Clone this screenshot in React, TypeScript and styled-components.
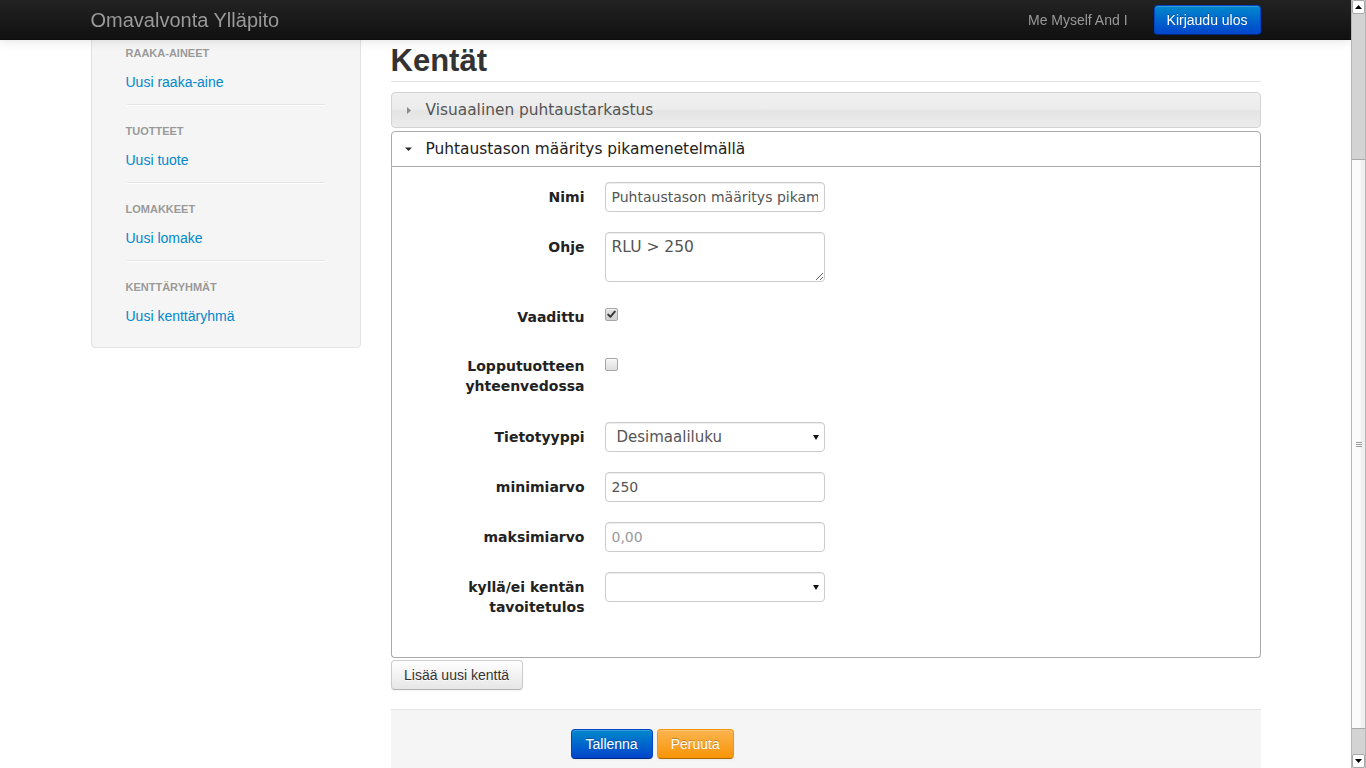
import React from "react";
import styled, { createGlobalStyle, css } from "styled-components";

const GlobalStyle = createGlobalStyle`
  html { overflow: hidden; }
  html, body { margin: 0; padding: 0; background: #fff; }
  body {
    margin-right: 15px;
    font-family: "Liberation Sans", Arial, Helvetica, sans-serif;
    font-size: 13px;
    line-height: 18px;
    color: #333;
  }
  * { box-sizing: border-box; }
`;

const Navbar = styled.header`
  position: fixed;
  top: 0;
  left: 0;
  right: 15px;
  z-index: 100;
  height: 40px;
  background: linear-gradient(#222222, #111111);
  border-bottom: 1px solid #0d0d0d;
  box-shadow: 0 1px 10px rgba(0, 0, 0, 0.12);
`;

const NavContainer = styled.div`
  width: 1170px;
  height: 40px;
  margin: 0 auto;
  display: flex;
  align-items: center;
`;

const Brand = styled.a`
  font-size: 20px;
  line-height: 20px;
  color: #999;
  text-decoration: none;
  flex: 1;
`;

const NavText = styled.span`
  font-size: 14px;
  line-height: 20px;
  color: #999;
  margin-right: 26px;
`;

/* Browser scrollbar (page is scrolled part way down) */
const ScrollRail = styled.div`
  position: fixed;
  top: 0;
  right: 0;
  bottom: 0;
  width: 15px;
  z-index: 200;
  display: flex;
  flex-direction: column;
  background: #d3d3d3;
  border-left: 1px solid #b5b5b5;
  border-right: 1px solid #b5b5b5;
`;

const ScrollArrow = styled.div`
  flex: none;
  height: 14px;
  display: flex;
  align-items: center;
  justify-content: center;
  background: #fff;
  border: 1px solid #a9a9a9;
  border-radius: 2px;
  svg {
    display: block;
  }
`;

const TrackGap = styled.div<{ $h: number }>`
  flex: none;
  height: ${(p) => p.$h}px;
`;

const TrackRest = styled.div`
  flex: 1;
`;

const Thumb = styled.div`
  flex: none;
  height: 570px;
  display: flex;
  align-items: center;
  justify-content: center;
  background: linear-gradient(90deg, #fbfbfb 0%, #fbfbfb 65%, #efefef 66%, #efefef 100%);
  border-top: 1px solid #aaaaaa;
  border-bottom: 1px solid #aaaaaa;
`;

const Grip = styled.div`
  width: 6px;
  height: 5px;
  border-top: 1px solid #9a9a9a;
  border-bottom: 1px solid #9a9a9a;
  display: flex;
  align-items: center;
  &::before {
    content: "";
    display: block;
    width: 100%;
    height: 1px;
    background: #9a9a9a;
  }
`;

type BtnKind = "default" | "primary" | "warning";

const btnColors: Record<BtnKind, ReturnType<typeof css>> = {
  default: css`
    color: #333;
    text-shadow: 0 1px 1px rgba(255, 255, 255, 0.75);
    background: linear-gradient(#ffffff, #e6e6e6);
    border: 1px solid #cccccc;
    border-bottom-color: #b3b3b3;
  `,
  primary: css`
    color: #fff;
    text-shadow: 0 -1px 0 rgba(0, 0, 0, 0.25);
    background: linear-gradient(#0088cc, #0044cc);
    border: 1px solid #0044cc;
    border-bottom-color: #002a80;
  `,
  warning: css`
    color: #fff;
    text-shadow: 0 -1px 0 rgba(0, 0, 0, 0.25);
    background: linear-gradient(#fbb450, #f89406);
    border: 1px solid #f89406;
    border-bottom-color: #ad6704;
  `,
};

const Button = styled.button<{ $kind?: BtnKind; $px?: number }>`
  display: inline-block;
  height: 30px;
  padding: 4px ${(p) => p.$px ?? 12}px;
  font-family: "Liberation Sans", Arial, sans-serif;
  font-size: 14px;
  line-height: 20px;
  border-radius: 4px;
  cursor: pointer;
  box-shadow: inset 0 1px 0 rgba(255, 255, 255, 0.2), 0 1px 2px rgba(0, 0, 0, 0.05);
  ${(p) => btnColors[p.$kind ?? "default"]}
`;

const Container = styled.div`
  width: 1170px;
  margin: 0 auto;
  padding-top: 20px;
  display: grid;
  grid-template-columns: 270px 870px;
  column-gap: 30px;
  align-items: start;
`;

const Well = styled.aside`
  background: #f5f5f5;
  border: 1px solid #e3e3e3;
  border-radius: 4px;
  padding: 19px;
  box-shadow: inset 0 1px 1px rgba(0, 0, 0, 0.05);
`;

const NavList = styled.ul`
  list-style: none;
  margin: 0;
  padding: 0 15px;
`;

const NavHeader = styled.li`
  padding: 3px 0;
  font-size: 11px;
  font-weight: bold;
  line-height: 20px;
  color: #999;
  text-transform: uppercase;
  text-shadow: 0 1px 0 rgba(255, 255, 255, 0.5);
`;

const NavItem = styled.li`
  padding: 6px 0 2px;
  line-height: 20px;
  font-size: 14px;
  a {
    color: #0088cc;
    text-decoration: none;
  }
`;

const Divider = styled.li`
  height: 1px;
  margin: 10px 1px 12px;
  background: #e5e5e5;
  border-bottom: 1px solid #fff;
  box-sizing: content-box;
`;

const Main = styled.main`
  min-width: 0;
`;

const PageHeader = styled.div`
  margin-top: 23px;
  margin-bottom: 10px;
  padding-bottom: 2px;
  border-bottom: 1px solid #e2e2e2;
`;

const Title = styled.h1`
  margin: 0;
  font-size: 31px;
  line-height: 36px;
  font-weight: bold;
  color: #333;
`;

const AccHeader = styled.div<{ $active?: boolean }>`
  display: flex;
  align-items: center;
  height: 36px;
  padding: 8px 8px 8px 9px;
  font-family: "DejaVu Sans", Verdana, sans-serif;
  font-size: 15.4px;
  line-height: 18px;
  cursor: pointer;
  ${(p) =>
    p.$active
      ? css`
          margin-top: 3px;
          background: #fff;
          border: 1px solid #aaaaaa;
          border-radius: 4px 4px 0 0;
          color: #212121;
        `
      : css`
          background: linear-gradient(#f0f0f0 0%, #ececec 48%, #e4e4e4 52%, #ececec 100%);
          border: 1px solid #d3d3d3;
          border-radius: 4px;
          color: #555;
        `}
`;

const AccIcon = styled.svg`
  width: 16px;
  height: 16px;
  flex: none;
  margin-right: 9px;
`;

const AccContent = styled.div`
  border: 1px solid #aaaaaa;
  border-top: 0;
  border-radius: 0 0 4px 4px;
  padding: 15px 33px 20px;
  background: #fff;
`;

const FieldRow = styled.div<{ $minH?: number }>`
  display: grid;
  grid-template-columns: 160px 220px;
  column-gap: 20px;
  align-items: start;
  margin-bottom: 20px;
  min-height: ${(p) => (p.$minH ? `${p.$minH}px` : "0")};
`;

const Label = styled.label`
  padding-top: 5px;
  text-align: right;
  font-family: "DejaVu Sans", Verdana, sans-serif;
  font-size: 14px;
  font-weight: bold;
  line-height: 20px;
  color: #222;
`;

const fieldBase = css`
  width: 220px;
  border: 1px solid #cccccc;
  border-radius: 4px;
  background: #fff;
  color: #555;
  font-family: "DejaVu Sans", Verdana, sans-serif;
  box-shadow: inset 0 1px 1px rgba(0, 0, 0, 0.075);
  outline: none;
`;

const TextInput = styled.input`
  ${fieldBase};
  height: 30px;
  padding: 4px 6px;
  font-size: 14px;
  line-height: 20px;
  &::placeholder {
    color: #999;
  }
`;

const TextArea = styled.textarea`
  ${fieldBase};
  display: block;
  height: 50px;
  padding: 4px 6px;
  font-size: 15.5px;
  line-height: 20px;
  resize: both;
`;

const SelectWrap = styled.div`
  position: relative;
  width: 220px;
  &::after {
    content: "";
    position: absolute;
    right: 6px;
    top: 13px;
    border-left: 3px solid transparent;
    border-right: 3px solid transparent;
    border-top: 5px solid #111;
    pointer-events: none;
  }
`;

const Select = styled.select`
  ${fieldBase};
  appearance: none;
  -webkit-appearance: none;
  height: 30px;
  padding: 4px 20px 4px 11px;
  font-size: 15px;
  line-height: 20px;
`;

const CheckBox = styled.span<{ $checked?: boolean; $top: number }>`
  display: block;
  width: 13px;
  height: 13px;
  margin-top: ${(p) => p.$top}px;
  border: 1px solid #a6a6a6;
  border-radius: 2px;
  background: ${(p) =>
    p.$checked ? "linear-gradient(#e2e2e2, #d0d0d0)" : "linear-gradient(#f6f6f6, #dedede)"};
  box-shadow: inset 0 1px 0 rgba(255, 255, 255, 0.6);
  svg {
    display: block;
  }
`;

const AddButtonRow = styled.div`
  margin-top: 2px;
`;

const FormActions = styled.div`
  margin-top: 19px;
  margin-bottom: 22px;
  padding: 19px 20px 18px 180px;
  background: #f5f5f5;
  border-top: 1px solid #e5e5e5;
  display: flex;
  gap: 4px;
`;

const Check = ({ checked, top }: { checked?: boolean; top: number }) => (
  <CheckBox role="checkbox" aria-checked={!!checked} $checked={checked} $top={top}>
    {checked && (
      <svg width="11" height="11" viewBox="0 0 11 11">
        <path
          d="M2.2 5.6 L4.4 7.8 L8.8 2.6"
          fill="none"
          stroke="#3a3a3a"
          strokeWidth="2"
          strokeLinecap="round"
          strokeLinejoin="round"
        />
      </svg>
    )}
  </CheckBox>
);

const Scrollbar = () => (
  <ScrollRail aria-hidden="true">
    <ScrollArrow>
      <svg width="7" height="4" viewBox="0 0 7 4">
        <polygon points="0,4 7,4 3.5,0" fill="#000" />
      </svg>
    </ScrollArrow>
    <TrackGap $h={145} />
    <Thumb>
      <Grip />
    </Thumb>
    <TrackRest />
    <ScrollArrow>
      <svg width="7" height="4" viewBox="0 0 7 4">
        <polygon points="0,0 7,0 3.5,4" fill="#000" />
      </svg>
    </ScrollArrow>
  </ScrollRail>
);

const sections = [
  { header: "Raaka-aineet", link: "Uusi raaka-aine" },
  { header: "Tuotteet", link: "Uusi tuote" },
  { header: "Lomakkeet", link: "Uusi lomake" },
  { header: "Kenttäryhmät", link: "Uusi kenttäryhmä" },
];

export default function App() {
  return (
    <>
      <GlobalStyle />
      <Navbar>
        <NavContainer>
          <Brand href="#">Omavalvonta Ylläpito</Brand>
          <NavText>Me Myself And I</NavText>
          <Button $kind="primary">Kirjaudu ulos</Button>
        </NavContainer>
      </Navbar>
      <Container>
        <Well>
          <NavList>
            {sections.map((s, i) => (
              <React.Fragment key={s.header}>
                {i > 0 && <Divider />}
                <NavHeader>{s.header}</NavHeader>
                <NavItem>
                  <a href="#">{s.link}</a>
                </NavItem>
              </React.Fragment>
            ))}
          </NavList>
        </Well>
        <Main>
          <PageHeader>
            <Title>Kentät</Title>
          </PageHeader>
          <AccHeader>
            <AccIcon viewBox="0 0 16 16">
              <polygon points="6,5 10,8.5 6,12" fill="#8a8a8a" />
            </AccIcon>
            Visuaalinen puhtaustarkastus
          </AccHeader>
          <AccHeader $active>
            <AccIcon viewBox="0 0 16 16">
              <polygon points="4,6.5 11,6.5 7.5,10" fill="#2a2a2a" />
            </AccIcon>
            Puhtaustason määritys pikamenetelmällä
          </AccHeader>
          <AccContent>
            <FieldRow>
              <Label>Nimi</Label>
              <TextInput defaultValue="Puhtaustason määritys pikamenetelmällä" />
            </FieldRow>
            <FieldRow>
              <Label>Ohje</Label>
              <TextArea defaultValue="RLU > 250" />
            </FieldRow>
            <FieldRow $minH={29}>
              <Label>Vaadittu</Label>
              <Check checked top={6} />
            </FieldRow>
            <FieldRow $minH={51}>
              <Label>
                Lopputuotteen
                <br />
                yhteenvedossa
              </Label>
              <Check top={7} />
            </FieldRow>
            <FieldRow>
              <Label>Tietotyyppi</Label>
              <SelectWrap>
                <Select defaultValue="desimaali">
                  <option value="teksti">Teksti</option>
                  <option value="desimaali">Desimaaliluku</option>
                  <option value="kylla">Kyllä/ei</option>
                </Select>
              </SelectWrap>
            </FieldRow>
            <FieldRow>
              <Label>minimiarvo</Label>
              <TextInput defaultValue="250" />
            </FieldRow>
            <FieldRow>
              <Label>maksimiarvo</Label>
              <TextInput placeholder="0,00" />
            </FieldRow>
            <FieldRow>
              <Label>
                kyllä/ei kentän
                <br />
                tavoitetulos
              </Label>
              <SelectWrap>
                <Select defaultValue="">
                  <option value=""></option>
                  <option value="kylla">Kyllä</option>
                  <option value="ei">Ei</option>
                </Select>
              </SelectWrap>
            </FieldRow>
          </AccContent>
          <AddButtonRow>
            <Button $px={12.5}>Lisää uusi kenttä</Button>
          </AddButtonRow>
          <FormActions>
            <Button $kind="primary" $px={14}>
              Tallenna
            </Button>
            <Button $kind="warning" $px={13}>
              Peruuta
            </Button>
          </FormActions>
        </Main>
      </Container>
      <Scrollbar />
    </>
  );
}
